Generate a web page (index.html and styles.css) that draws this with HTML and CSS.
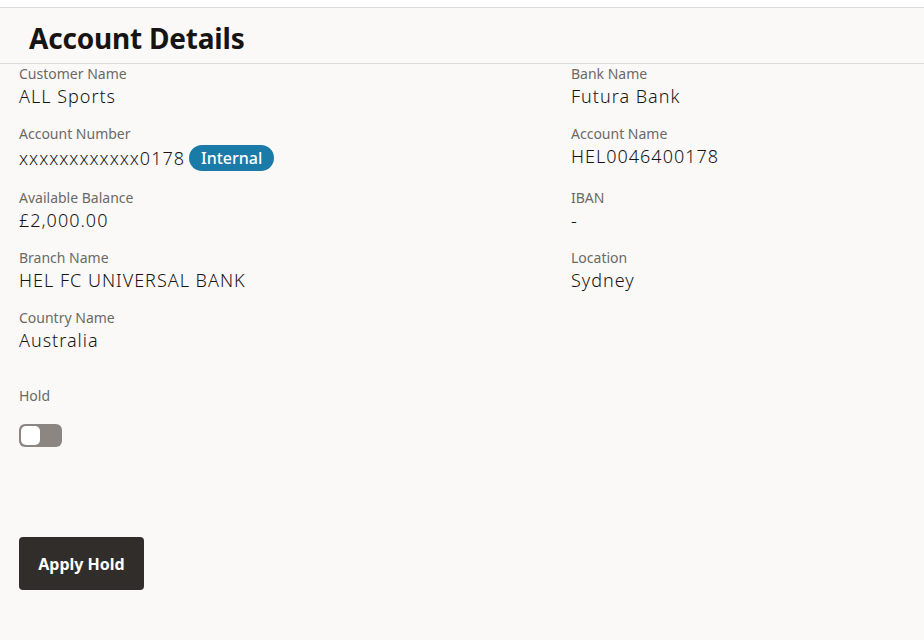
FILE: index.html
```html
<!DOCTYPE html>
<html>
<head>
<meta charset="utf-8">
<link rel="stylesheet" href="styles.css">
</head>
<body>
<div class="top-strip"></div>
<main class="panel">
  <header class="panel-header">
    <h1 class="title">Account Details</h1>
  </header>
  <section class="details">
    <div class="field">
      <div class="label">Customer Name</div>
      <div class="value">ALL Sports</div>
    </div>
    <div class="field">
      <div class="label">Bank Name</div>
      <div class="value">Futura Bank</div>
    </div>
    <div class="field field-tall">
      <div class="label">Account Number</div>
      <div class="value value-badge">xxxxxxxxxxxx0178<span class="badge">Internal</span></div>
    </div>
    <div class="field field-tall">
      <div class="label">Account Name</div>
      <div class="value">HEL0046400178</div>
    </div>
    <div class="field">
      <div class="label">Available Balance</div>
      <div class="value">£2,000.00</div>
    </div>
    <div class="field">
      <div class="label">IBAN</div>
      <div class="value">-</div>
    </div>
    <div class="field">
      <div class="label">Branch Name</div>
      <div class="value">HEL FC UNIVERSAL BANK</div>
    </div>
    <div class="field">
      <div class="label">Location</div>
      <div class="value">Sydney</div>
    </div>
    <div class="field">
      <div class="label">Country Name</div>
      <div class="value">Australia</div>
    </div>
  </section>
  <section class="hold">
    <div class="label">Hold</div>
    <div class="toggle"><span class="knob"></span></div>
  </section>
  <div class="actions">
    <button class="btn">Apply Hold</button>
  </div>
</main>
</body>
</html>
```
FILE: styles.css
```css
* { box-sizing: border-box; }
html, body { margin: 0; padding: 0; }
body {
  background: #faf9f8;
  font-family: "Noto Sans", "Open Sans", sans-serif;
  color: #161513;
  width: 924px;
  height: 640px;
  overflow: hidden;
}
.top-strip {
  height: 8px;
  background: #ffffff;
  border-bottom: 1px solid #dcdbd9;
}
.panel-header {
  height: 56px;
  border-bottom: 1px solid #dedcd9;
  padding-left: 29px;
  padding-top: 4px;
  display: flex;
  align-items: center;
}
.title {
  margin: 0;
  font-size: 28px;
  font-weight: 700;
  line-height: 32px;
  letter-spacing: -0.2px;
  color: #161513;
}
.details {
  display: grid;
  grid-template-columns: 552px 1fr;
  padding-left: 19px;
}
.field {
  height: 60px;
  padding-top: 1px;
}
.field-tall { height: 64px; }
.label {
  font-size: 14px;
  line-height: 17px;
  color: #6b6966;
}
.value {
  font-size: 18px;
  line-height: 24px;
  font-weight: 300;
  letter-spacing: 1px;
  color: #161513;
  margin-top: 2px;
}
.value-badge {
  display: flex;
  align-items: center;
  gap: 4px;
}
.badge {
  display: inline-flex;
  align-items: center;
  height: 26px;
  padding: 0 12px;
  border-radius: 13px;
  background: #1a7aa8;
  color: #ffffff;
  font-size: 16px;
  font-weight: 500;
  letter-spacing: 0;
  margin-top: 1px;
}
.hold {
  padding-left: 19px;
  padding-top: 19px;
}
.toggle {
  margin-top: 20px;
  width: 43px;
  height: 23px;
  border-radius: 6px;
  background: #8b8681;
  padding: 2px;
}
.knob {
  display: block;
  width: 19px;
  height: 19px;
  border-radius: 5px;
  background: #ffffff;
}
.actions {
  padding-left: 19px;
  padding-top: 90px;
}
.btn {
  width: 125px;
  height: 53px;
  border: none;
  border-radius: 4px;
  background: #312d2a;
  color: #ffffff;
  font-family: "Noto Sans", "Open Sans", sans-serif;
  font-size: 16px;
  font-weight: 700;
  padding: 0;
}
```
